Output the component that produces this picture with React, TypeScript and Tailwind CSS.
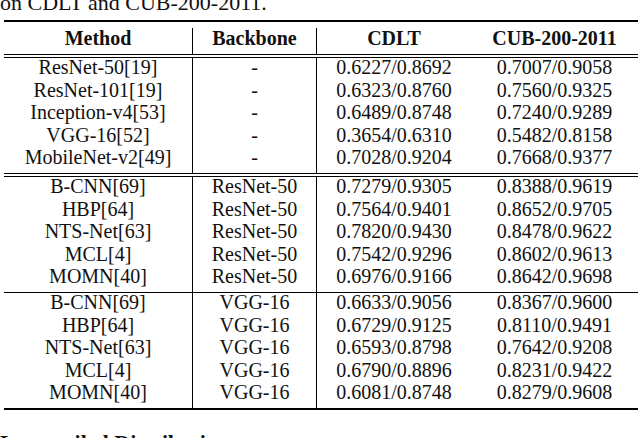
import React from "react";

const sections: string[][][] = [
  [
    ["ResNet-50[19]", "-", "0.6227/0.8692", "0.7007/0.9058"],
    ["ResNet-101[19]", "-", "0.6323/0.8760", "0.7560/0.9325"],
    ["Inception-v4[53]", "-", "0.6489/0.8748", "0.7240/0.9289"],
    ["VGG-16[52]", "-", "0.3654/0.6310", "0.5482/0.8158"],
    ["MobileNet-v2[49]", "-", "0.7028/0.9204", "0.7668/0.9377"],
  ],
  [
    ["B-CNN[69]", "ResNet-50", "0.7279/0.9305", "0.8388/0.9619"],
    ["HBP[64]", "ResNet-50", "0.7564/0.9401", "0.8652/0.9705"],
    ["NTS-Net[63]", "ResNet-50", "0.7820/0.9430", "0.8478/0.9622"],
    ["MCL[4]", "ResNet-50", "0.7542/0.9296", "0.8602/0.9613"],
    ["MOMN[40]", "ResNet-50", "0.6976/0.9166", "0.8642/0.9698"],
  ],
  [
    ["B-CNN[69]", "VGG-16", "0.6633/0.9056", "0.8367/0.9600"],
    ["HBP[64]", "VGG-16", "0.6729/0.9125", "0.8110/0.9491"],
    ["NTS-Net[63]", "VGG-16", "0.6593/0.8798", "0.7642/0.9208"],
    ["MCL[4]", "VGG-16", "0.6790/0.8896", "0.8231/0.9422"],
    ["MOMN[40]", "VGG-16", "0.6081/0.8748", "0.8279/0.9608"],
  ],
];

const colBorder = ["", "border-l border-black", "border-l border-black", ""];

function Section({ rows }: { rows: string[][] }) {
  return (
    <div className="grid grid-cols-[188px_124px_155px_1fr]">
      {[0, 1, 2, 3].map((c) => (
        <div key={c} className={`pb-[2px] ${colBorder[c]}`}>
          {rows.map((r, i) => (
            <div
              key={i}
              className="h-[22.6px] text-center text-[20px] leading-[19.5px] whitespace-nowrap"
            >
              {r[c]}
            </div>
          ))}
        </div>
      ))}
    </div>
  );
}

function DoubleRule() {
  return (
    <div>
      <div className="h-[1px] bg-black" />
      <div className="h-[2px]" />
      <div className="h-[1px] bg-black" />
    </div>
  );
}

export default function App() {
  const headers = ["Method", "Backbone", "CDLT", "CUB-200-2011"];
  return (
    <div className="w-[640px] h-[438px] overflow-hidden bg-white text-[#111] font-['Liberation_Serif',serif]">
      <div className="h-[20px] overflow-hidden">
        <div className="-mt-[8px] text-[22px] leading-[22px] whitespace-nowrap">
          on CDLT and CUB-200-2011.
        </div>
      </div>
      <div className="ml-[4px] w-[634px]">
        <div className="h-[2px] bg-black" />
        <div className="grid grid-cols-[188px_124px_155px_1fr] h-[32px]">
          {headers.map((h, i) => (
            <div key={h} className="pt-[6px]">
              <div
                className={`h-[26px] text-center font-bold text-[20px] leading-[20px] whitespace-nowrap ${colBorder[i]}`}
              >
                {h}
              </div>
            </div>
          ))}
        </div>
        <DoubleRule />
        <Section rows={sections[0]} />
        <DoubleRule />
        <Section rows={sections[1]} />
        <div className="h-[1px] bg-black" />
        <Section rows={sections[2]} />
        <div className="h-[2px] bg-black" />
      </div>
      <div className="mt-[22px] text-[22px] leading-[22px] font-bold whitespace-nowrap">
        Long-tailed Distribution
      </div>
    </div>
  );
}
